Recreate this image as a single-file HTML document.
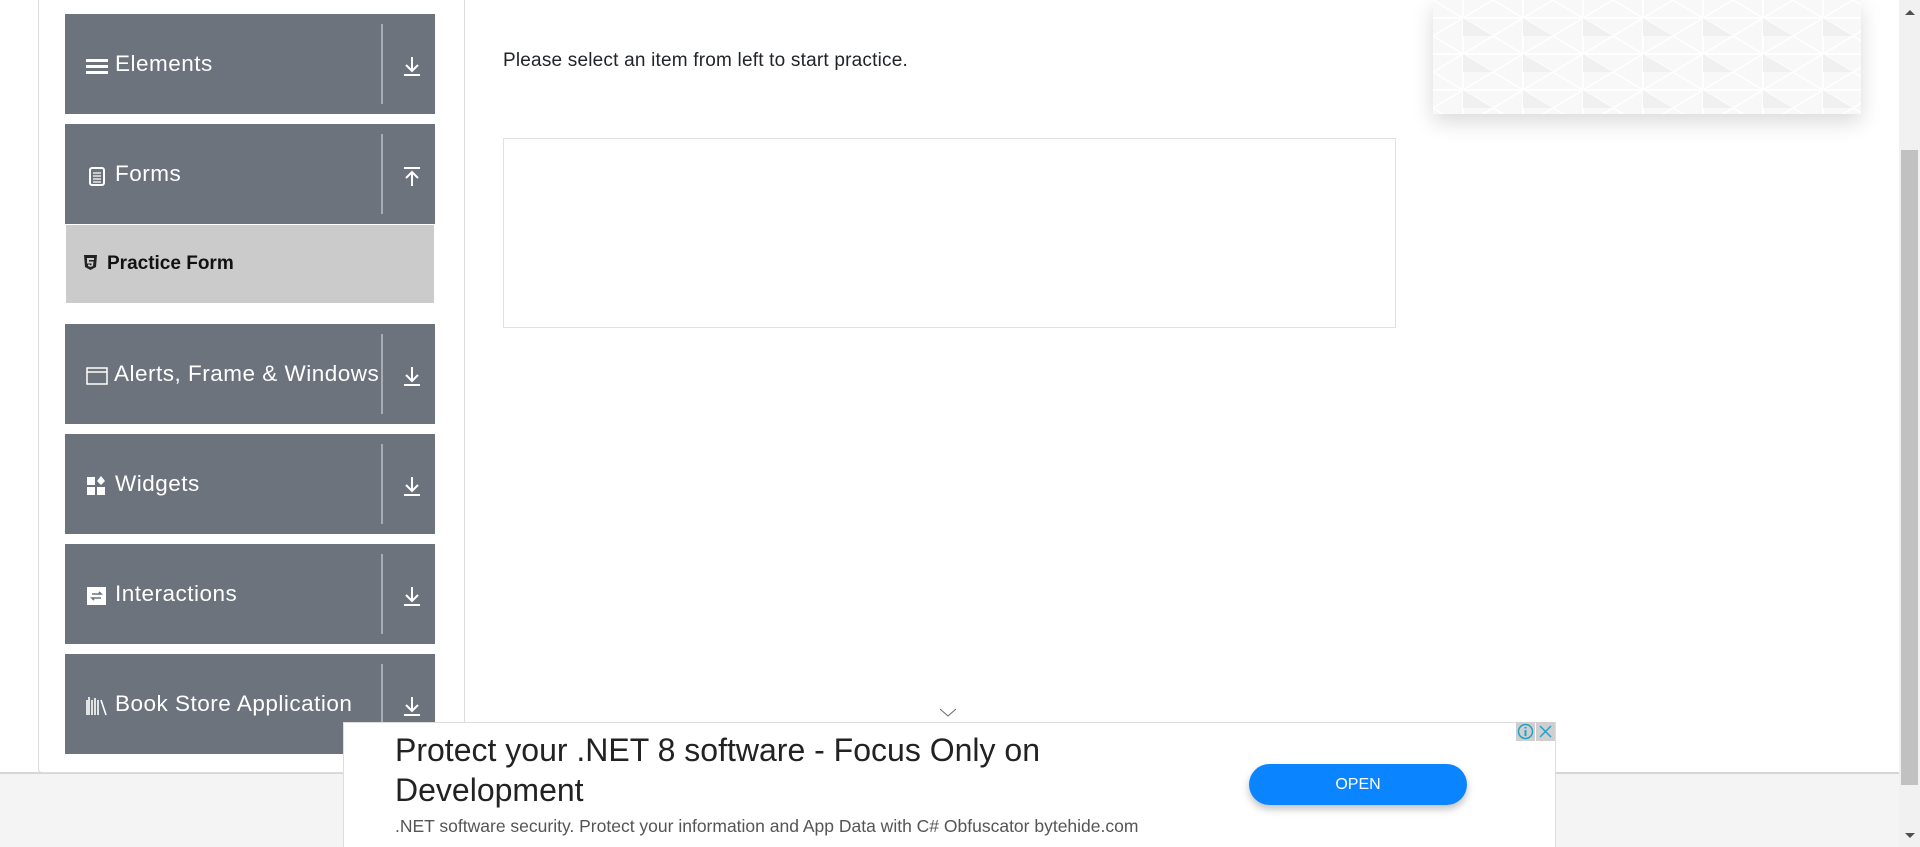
<!DOCTYPE html>
<html><head><meta charset="utf-8"><style>
*{margin:0;padding:0;box-sizing:border-box}
body{width:1920px;height:847px;overflow:hidden;background:#fff;font-family:"Liberation Sans",sans-serif;position:relative}
.abs{position:absolute}
.side{left:38px;top:-10px;width:427px;height:783px;border:1px solid #dcdcdc;border-top:none;border-radius:0 0 4px 4px;background:#fff}
.card{position:absolute;left:65px;width:370px;height:100px;background:#6c737d;color:#fff}
.card .t{position:absolute;left:50px;top:0;line-height:100px;font-size:22.5px;letter-spacing:0.5px;white-space:nowrap}
.card .ic{position:absolute;left:21px;top:40px;width:22px;height:22px}
.card .sep{position:absolute;left:316px;top:10px;width:2px;height:80px;background:#a9adb3}
.card .ar{position:absolute;left:337px;top:42px;width:20px;height:20px}
.foot{left:0;top:772px;width:1899px;height:75px;background:#f4f4f4;border-top:2px solid #d6d6d6}
</style></head><body>
<div class="abs foot"></div>
<div class="abs side"></div>

<div class="card" style="top:14px"><svg class="ic" viewBox="0 0 22 22"><rect x="0" y="5" width="22" height="3" fill="#fff"/><rect x="0" y="11" width="22" height="3" fill="#fff"/><rect x="0" y="17" width="22" height="3" fill="#fff"/></svg><div class="t">Elements</div><div class="sep"></div><svg class="ar" viewBox="0 0 20 20"><path d="M10 1V15M4 9L10 15L16 9M2 19H18" stroke="#fff" stroke-width="2" fill="none"/></svg></div>

<div class="card" style="top:124px"><svg class="ic" viewBox="0 0 22 22"><rect x="4" y="4" width="14" height="17" rx="2" stroke="#fff" stroke-width="2" fill="none"/><path d="M7 9H15M7 12H15M7 15H15M7 18H15" stroke="#fff" stroke-width="1.2"/></svg><div class="t">Forms</div><div class="sep"></div><svg class="ar" viewBox="0 0 20 20"><path d="M10 19V5M4 11L10 5L16 11M2 1H18" stroke="#fff" stroke-width="2" fill="none" transform="translate(0,1)"/></svg></div>

<div class="abs" style="left:66px;top:225px;width:368px;height:78px;background:#cbcbcb"></div>
<svg class="abs" style="left:83px;top:255px" width="15" height="15" viewBox="0 0 15 15"><path d="M1 0H14L13 12L7.5 15L2 12Z" fill="#222"/><path d="M4 3H11V5H6V6.5H10.5L10 11L7.5 12L5 11V9.5H7V10.5L8.5 10V8.5H4Z" fill="#cbcbcb"/></svg>
<div class="abs" style="left:107px;top:253px;font-size:19px;font-weight:bold;color:#111">Practice Form</div>

<div class="card" style="top:324px"><svg class="ic" viewBox="0 0 22 22"><rect x="1" y="4" width="20" height="16" stroke="#fff" stroke-width="1.5" fill="none"/><path d="M1 8H21" stroke="#fff" stroke-width="1.5"/></svg><div class="t" style="left:49px">Alerts, Frame &amp; Windows</div><div class="sep"></div><svg class="ar" viewBox="0 0 20 20"><path d="M10 1V15M4 9L10 15L16 9M2 19H18" stroke="#fff" stroke-width="2" fill="none"/></svg></div>

<div class="card" style="top:434px"><svg class="ic" viewBox="0 0 22 22"><rect x="1" y="3" width="8" height="8" fill="#fff"/><rect x="1" y="13" width="8" height="8" fill="#fff"/><rect x="11" y="13" width="8" height="8" fill="#fff"/><path d="M15 2L19 7L15 11L11 7Z" fill="#fff"/></svg><div class="t">Widgets</div><div class="sep"></div><svg class="ar" viewBox="0 0 20 20"><path d="M10 1V15M4 9L10 15L16 9M2 19H18" stroke="#fff" stroke-width="2" fill="none"/></svg></div>

<div class="card" style="top:544px"><svg class="ic" viewBox="0 0 22 22"><rect x="1" y="3" width="19" height="18" fill="#fff"/><path d="M6 10H15L13 8M15 14H6L8 16" stroke="#6c737d" stroke-width="1.6" fill="none"/></svg><div class="t">Interactions</div><div class="sep"></div><svg class="ar" viewBox="0 0 20 20"><path d="M10 1V15M4 9L10 15L16 9M2 19H18" stroke="#fff" stroke-width="2" fill="none"/></svg></div>

<div class="card" style="top:654px"><svg class="ic" viewBox="0 0 22 22"><path d="M1 6V21M3 3V21M6 6V21M9 4V21M12 6V21M15 6L20 21" stroke="#fff" stroke-width="1.6" fill="none"/></svg><div class="t">Book Store Application</div><div class="sep"></div><svg class="ar" viewBox="0 0 20 20"><path d="M10 1V15M4 9L10 15L16 9M2 19H18" stroke="#fff" stroke-width="2" fill="none"/></svg></div>

<div class="abs" style="left:503px;top:50px;font-size:19px;letter-spacing:0.2px;color:#212529">Please select an item from left to start practice.</div>
<div class="abs" style="left:503px;top:138px;width:893px;height:190px;border:1px solid #e0e0e0"></div>

<div class="abs" style="left:1433px;top:0;width:428px;height:114px;box-shadow:0 8px 20px rgba(0,0,0,.15);background:#f8f8f8;overflow:hidden">
<svg width="428" height="114"><defs><pattern id="p" width="60" height="36" patternUnits="userSpaceOnUse"><path d="M0 0L30 18L0 36M60 0L30 18L60 36M0 18H60M30 0V36" stroke="#fff" stroke-width="1.5" fill="none"/><path d="M30 18L60 36H30Z" fill="#f0f0f0"/></pattern></defs><rect width="428" height="114" fill="url(#p)"/></svg></div>

<svg class="abs" style="left:939px;top:708px" width="18" height="10"><path d="M1 1L9 8L17 1" stroke="#666" fill="none"/></svg>

<div class="abs" style="left:343px;top:722px;width:1213px;height:125px;background:#fff;border:1px solid #ddd;border-bottom:none"></div>
<div class="abs" style="left:395px;top:730px;font-size:32px;line-height:40px;color:#222;width:900px">Protect your .NET 8 software - Focus Only on<br>Development</div>
<div class="abs" style="left:395px;top:816px;font-size:17.5px;color:#555">.NET software security. Protect your information and App Data with C# Obfuscator bytehide.com</div>
<div class="abs" style="left:1249px;top:764px;width:218px;height:41px;border-radius:21px;background:#0a84ff;box-shadow:0 4px 8px rgba(0,0,0,.25);color:#fff;font-size:16px;text-align:center;line-height:41px">OPEN</div>
<div class="abs" style="left:1516px;top:722px;width:19px;height:19px;background:#cfcfcf"><svg width="19" height="19"><circle cx="9.5" cy="9.5" r="7" stroke="#1fa3c8" stroke-width="1.5" fill="none"/><path d="M9.5 8V14M9.5 5V6.5" stroke="#1fa3c8" stroke-width="2"/></svg></div>
<div class="abs" style="left:1536px;top:722px;width:19px;height:19px;background:#cfcfcf"><svg width="19" height="19"><path d="M4 4L15 15M15 4L4 15" stroke="#1fa3c8" stroke-width="1.5"/></svg></div>

<div class="abs" style="left:1899px;top:0;width:21px;height:847px;background:#f1f1f1"></div>
<div class="abs" style="left:1901px;top:150px;width:17px;height:635px;background:#c1c1c1"></div>
<svg class="abs" style="left:1903px;top:8px" width="14" height="8"><path d="M2 7L7 2L12 7Z" fill="#505050"/></svg>
<svg class="abs" style="left:1903px;top:832px" width="14" height="8"><path d="M2 1L7 6L12 1Z" fill="#505050"/></svg>
</body></html>
